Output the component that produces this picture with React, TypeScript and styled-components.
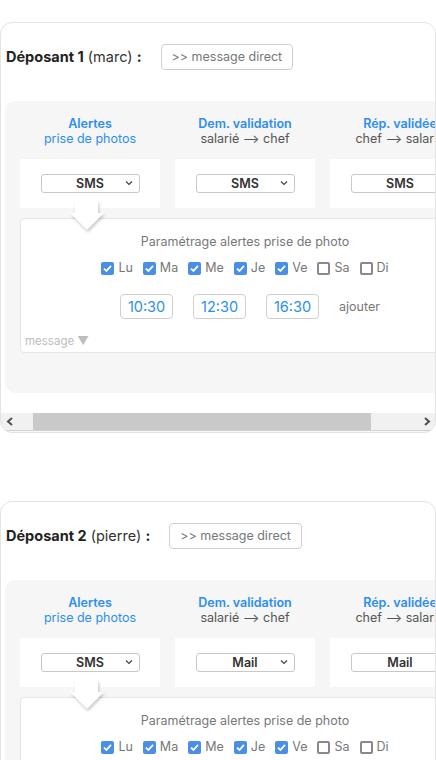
import React from 'react';
import styled, { createGlobalStyle } from 'styled-components';

const GlobalStyle = createGlobalStyle`
  html, body { margin: 0; padding: 0; background: #fff; overflow: hidden; }
  body { font-family: Inter, "Open Sans", sans-serif; color: #333; }
`;

const Page = styled.div`
  display: flex;
  flex-direction: column;
  gap: 68px;
  padding-top: 22px;
  width: 436px;
`;

const Card = styled.div`
  border: 1px solid #e3e3e3;
  border-radius: 12px;
  overflow: hidden;
  background: #fff;
  width: 434px;
`;

const Header = styled.div`
  display: flex;
  align-items: center;
  gap: 19px;
  padding: 20px 0 0 5px;
  height: 27px;
`;

const Name = styled.div`
  font-size: 14.5px;
  color: #222;
  b { font-weight: 700; }
  span { font-weight: 400; color: #333; }
`;

const DirectBtn = styled.button`
  font-family: inherit;
  font-size: 12.5px;
  color: #777;
  background: #fff;
  border: 1px solid #cfcfcf;
  border-radius: 4px;
  height: 26px;
  padding: 0 10px;
`;

const Viewport = styled.div`
  overflow: hidden;
  padding: 31px 0 20px 4px;
`;

const Panel = styled.div`
  width: 480px;
  background: #f6f6f6;
  border-radius: 10px;
  padding: 15px 15px 40px;
  display: flex;
  flex-direction: column;
`;

const Columns = styled.div`
  display: grid;
  grid-template-columns: repeat(3, 140px);
  column-gap: 15px;
`;

const ColHead = styled.div`
  text-align: center;
  font-size: 12.5px;
  line-height: 15px;
  height: 30px;
  white-space: nowrap;
  b { display: block; font-weight: 600; color: #2b8ef0; }
`;

const Sub = styled.span<{ $blue?: boolean }>`
  color: ${(p) => (p.$blue ? '#2b8ef0' : '#555')};
`;

const Cell = styled.div`
  background: #fff;
  margin-top: 13px;
  height: 49px;
  display: flex;
  align-items: center;
  justify-content: center;
`;

const SelectBox = styled.div`
  width: 97px;
  height: 17px;
  border: 1px solid #c8c8c8;
  border-radius: 3px;
  position: relative;
  display: flex;
  align-items: center;
  justify-content: center;
  font-size: 12.5px;
  font-weight: 600;
  color: #333;
  svg { position: absolute; right: 6px; top: 5px; }
`;

const ParamWrap = styled.div`
  position: relative;
  margin-top: 10px;
  width: 450px;
`;

const ParamBox = styled.div`
  background: #fff;
  border: 1px solid #e6e6e6;
  border-radius: 4px;
  height: 135px;
  box-sizing: border-box;
  display: flex;
  flex-direction: column;
  align-items: center;
  padding-top: 15px;
`;

const Arrow = styled.svg`
  position: absolute;
  left: 50px;
  top: -17px;
  filter: drop-shadow(1px 2px 1.5px rgba(0, 0, 0, 0.22));
`;

const ParamTitle = styled.div`
  font-size: 12.5px;
  color: #777;
  line-height: 16px;
`;

const Days = styled.div`
  display: flex;
  gap: 10px;
  margin-top: 11px;
`;

const Day = styled.label`
  display: flex;
  align-items: center;
  gap: 4px;
  font-size: 12.5px;
  color: #777;
  line-height: 14px;
`;

const Box = styled.span<{ $on: boolean }>`
  width: 13px;
  height: 13px;
  box-sizing: border-box;
  border-radius: 2px;
  background: ${(p) => (p.$on ? '#4a8fe7' : '#fff')};
  border: ${(p) => (p.$on ? 'none' : '2px solid #8a8791')};
  display: flex;
  align-items: center;
  justify-content: center;
`;

const Times = styled.div`
  display: flex;
  align-items: center;
  gap: 20px;
  margin-top: 19px;
  padding-left: 10px;
`;

const Time = styled.div`
  width: 51px;
  height: 23px;
  border: 1px solid #cfcfcf;
  border-radius: 4px;
  display: flex;
  align-items: center;
  justify-content: center;
  font-size: 14.5px;
  color: #2b8ef0;
`;

const Add = styled.span`
  font-size: 12.5px;
  color: #777;
`;

const Msg = styled.div`
  align-self: flex-start;
  margin: 15px 0 0 4px;
  font-size: 11.5px;
  color: #bdbdbd;
`;

const Scrollbar = styled.div`
  display: flex;
  height: 17px;
  background: #f1f1f1;
  box-shadow: 0 1px 1px rgba(0, 0, 0, 0.18);
  margin-bottom: 2px;
`;

const ScrollBtn = styled.div`
  width: 17px;
  display: flex;
  align-items: center;
  justify-content: center;
`;

const Track = styled.div`
  flex: 1;
  display: flex;
`;

const Thumb = styled.div`
  margin-left: 15px;
  width: 338px;
  background: #c9c9c9;
`;

const Chevron = () => (
  <svg width="8" height="6" viewBox="0 0 8 6">
    <path d="M1 1.5 L4 4.5 L7 1.5" fill="none" stroke="#444" strokeWidth="1.2" />
  </svg>
);

const Check = () => (
  <svg width="11" height="11" viewBox="0 0 11 11">
    <path d="M2 5.6 L4.4 8 L9 2.8" fill="none" stroke="#fff" strokeWidth="1.8" />
  </svg>
);

const days = [
  { d: 'Lu', on: true }, { d: 'Ma', on: true }, { d: 'Me', on: true },
  { d: 'Je', on: true }, { d: 'Ve', on: true }, { d: 'Sa', on: false }, { d: 'Di', on: false },
];

function Deposant({ n, name, selects }: { n: number; name: string; selects: string[] }) {
  return (
    <Card>
      <Header>
        <Name><b>Déposant {n}</b> <span>({name})</span> <b>:</b></Name>
        <DirectBtn>&gt;&gt; message direct</DirectBtn>
      </Header>
      <Viewport>
        <Panel>
          <Columns>
            <ColHead><b>Alertes</b><Sub $blue>prise de photos</Sub></ColHead>
            <ColHead><b>Dem. validation</b><Sub>salarié ⟶ chef</Sub></ColHead>
            <ColHead><b>Rép. validée</b><Sub>chef ⟶ salarié</Sub></ColHead>
            {selects.map((s, i) => (
              <Cell key={i}>
                <SelectBox>{s}<Chevron /></SelectBox>
              </Cell>
            ))}
          </Columns>
          <ParamWrap>
            <ParamBox>
              <ParamTitle>Paramétrage alertes prise de photo</ParamTitle>
              <Days>
                {days.map((d) => (
                  <Day key={d.d}>
                    <Box $on={d.on}>{d.on && <Check />}</Box>
                    {d.d}
                  </Day>
                ))}
              </Days>
              <Times>
                <Time>10:30</Time>
                <Time>12:30</Time>
                <Time>16:30</Time>
                <Add>ajouter</Add>
              </Times>
              <Msg>message ▼</Msg>
            </ParamBox>
            <Arrow width="36" height="32" viewBox="0 0 36 32">
              <polygon points="5,0 28,0 28,12 34,12 17,29 0,12 5,12" fill="#fff" />
            </Arrow>
          </ParamWrap>
        </Panel>
      </Viewport>
      <Scrollbar>
        <ScrollBtn>
          <svg width="8" height="9" viewBox="0 0 8 9"><path d="M6 1 L2 4.5 L6 8" fill="none" stroke="#505050" strokeWidth="2" /></svg>
        </ScrollBtn>
        <Track><Thumb /></Track>
        <ScrollBtn>
          <svg width="8" height="9" viewBox="0 0 8 9"><path d="M2 1 L6 4.5 L2 8" fill="none" stroke="#505050" strokeWidth="2" /></svg>
        </ScrollBtn>
      </Scrollbar>
    </Card>
  );
}

export default function App() {
  return (
    <>
      <GlobalStyle />
      <Page>
        <Deposant n={1} name="marc" selects={['SMS', 'SMS', 'SMS']} />
        <Deposant n={2} name="pierre" selects={['SMS', 'Mail', 'Mail']} />
      </Page>
    </>
  );
}
